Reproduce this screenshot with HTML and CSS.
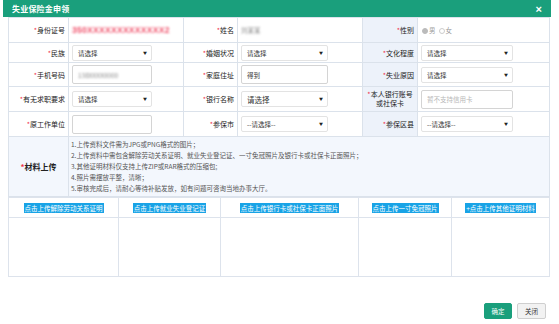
FILE: index.html
```html
<!DOCTYPE html>
<html lang="zh-CN">
<head>
    <meta charset="UTF-8">
    <title>失业保险金申领</title>
    <link rel="stylesheet" href="styles.css">
</head>
<body>

    <!-- 弹出层 -->
    <div class="dialog">
        <div class="dlg-head">
            <span class="dlg-title">失业保险金申领</span>
            <span class="dlg-close">×</span>
        </div>

        <div class="dlg-body">
            <!-- 基本信息 -->
            <table class="form">
                <colgroup>
                    <col style="width:60px"><col style="width:115px">
                    <col style="width:54px"><col style="width:125px">
                    <col style="width:55px"><col style="width:132px">
                </colgroup>
                <tr class="row-a">
                    <td class="lbl"><i>*</i>身份证号</td>
                    <td class="val"><span class="blur-red">350XXXXXXXXXXXXX2</span></td>
                    <td class="lbl"><i>*</i>姓名</td>
                    <td class="val"><span class="blur-gray">刘某某</span></td>
                    <td class="lbl lbl-hl"><i>*</i>性别</td>
                    <td class="val"><span class="radio on"></span><span class="gray">男</span><span class="radio"></span><span class="gray">女</span></td>
                </tr>
                <tr class="row-b">
                    <td class="lbl"><i>*</i>民族</td>
                    <td class="val"><div class="sel w1"><span>请选择</span><b>▼</b></div></td>
                    <td class="lbl"><i>*</i>婚姻状况</td>
                    <td class="val"><div class="sel w2"><span>请选择</span><b>▼</b></div></td>
                    <td class="lbl lbl-hl"><i>*</i>文化程度</td>
                    <td class="val"><div class="sel w3"><span>请选择</span><b>▼</b></div></td>
                </tr>
                <tr class="row-c">
                    <td class="lbl"><i>*</i>手机号码</td>
                    <td class="val"><div class="inp w1 tall"><span class="blur-gray">138XXXX0000</span></div></td>
                    <td class="lbl"><i>*</i>家庭住址</td>
                    <td class="val"><div class="inp w2 tall"><span>得到</span></div></td>
                    <td class="lbl lbl-hl"><i>*</i>失业原因</td>
                    <td class="val"><div class="sel w3"><span>请选择</span><b>▼</b></div></td>
                </tr>
                <tr class="row-d">
                    <td class="lbl"><i>*</i>有无求职要求</td>
                    <td class="val"><div class="sel w1"><span>请选择</span><b>▼</b></div></td>
                    <td class="lbl"><i>*</i>银行名称</td>
                    <td class="val"><div class="sel w2 big"><span>请选择</span><b>▼</b></div></td>
                    <td class="lbl lbl-hl two"><i>*</i>本人银行账号<br>或社保卡</td>
                    <td class="val"><div class="inp w3 tall"><span class="ph">暂不支持信用卡</span></div></td>
                </tr>
                <tr class="row-d">
                    <td class="lbl"><i>*</i>原工作单位</td>
                    <td class="val"><div class="inp w1 tall"></div></td>
                    <td class="lbl"><i>*</i>参保市</td>
                    <td class="val"><div class="sel w2"><span>--请选择--</span><b>▼</b></div></td>
                    <td class="lbl lbl-hl"><i>*</i>参保区县</td>
                    <td class="val"><div class="sel w3"><span>--请选择--</span><b>▼</b></div></td>
                </tr>
                <tr class="row-mat">
                    <td class="lbl lbl-big"><i>*</i>材料上传</td>
                    <td class="notes" colspan="5">
                        <p>1.上传资料文件需为JPG或PNG格式的图片；</p>
                        <p>2.上传资料中需包含解除劳动关系证明、就业失业登记证、一寸免冠照片及银行卡或社保卡正面照片；</p>
                        <p>3.其他证明材料仅支持上传ZIP或RAR格式的压缩包;</p>
                        <p>4.照片需摆放平整，清晰；</p>
                        <p>5.审核完成后，请耐心等待补贴发放，如有问题可咨询当地办事大厅。</p>
                    </td>
                </tr>
            </table>

            <!-- 上传区域 -->
            <table class="uploads">
                <colgroup>
                    <col style="width:110px"><col style="width:102px"><col style="width:138px">
                    <col style="width:93px"><col style="width:98px">
                </colgroup>
                <tr class="up-head">
                    <td><span class="up-btn">点击上传解除劳动关系证明</span></td>
                    <td><span class="up-btn">点击上传就业失业登记证</span></td>
                    <td><span class="up-btn">点击上传银行卡或社保卡正面照片</span></td>
                    <td><span class="up-btn">点击上传一寸免冠照片</span></td>
                    <td><span class="up-btn">+点击上传其他证明材料</span></td>
                </tr>
                <tr class="up-body">
                    <td></td><td></td><td></td><td></td><td></td>
                </tr>
            </table>
        </div>

        <div class="dlg-foot">
            <button class="btn btn-ok">确定</button>
            <button class="btn">关闭</button>
        </div>
        <div class="dlg-bar"></div>
    </div>

</body>
</html>
```

FILE: styles.css
```css
/* Estilos gerais */
body {
    margin: 0;
    padding: 0;
    background: #fff;
    font-family: "Noto Sans CJK SC", "Liberation Sans", sans-serif;
    color: #333;
}

.dialog {
    width: 548px;
    margin-left: 3px;
}

/* Cabeçalho */
.dlg-head {
    height: 17px;
    background-color: #1a9f7c;
    color: #fff;
    display: flex;
    align-items: center;
    justify-content: space-between;
    padding: 0 9px 0 9px;
}

.dlg-title {
    font-size: 8px;
    font-weight: bold;
    letter-spacing: 0.2px;
}

.dlg-close {
    font-family: "Liberation Sans", sans-serif;
    font-size: 11px;
    font-weight: bold;
}

.dlg-body {
    padding: 0 2px 0 5px;
}

/* Formulário */
table {
    border-collapse: collapse;
    table-layout: fixed;
    width: 541px;
}

td {
    border: 1px solid #dbe2eb;
    padding: 0;
    font-size: 7px;
    vertical-align: middle;
}

.row-a { height: 25px; }
.row-b { height: 20px; }
.row-c { height: 24px; }
.row-d { height: 25px; }
.row-mat { height: 60px; background-color: #f3f7fd; }

.lbl {
    text-align: right;
    padding-right: 3px;
    color: #222;
    white-space: nowrap;
}

.lbl i {
    font-style: normal;
    color: #f0304a;
}

.lbl-hl {
    background-color: #edf2fa;
}

.lbl.two {
    line-height: 9px;
    text-align: center;
    padding-right: 0;
}

.lbl-big {
    text-align: center;
    padding-right: 0;
    font-size: 8px;
    font-weight: bold;
}

.val {
    padding-left: 3px;
}

.sel, .inp {
    box-sizing: border-box;
    height: 16px;
    background: #fff;
    border: 1px solid #e3e3e3;
    border-radius: 2px;
    display: flex;
    align-items: center;
    justify-content: space-between;
    padding: 0 4px 0 5px;
    font-size: 6.5px;
    color: #333;
}

.sel b {
    font-size: 4px;
    font-weight: normal;
    color: #222;
}

.sel.big span {
    font-size: 7.5px;
}

.inp {
    border-color: #d4d4d4;
}

.inp.tall {
    height: 19px;
}

.w1 { width: 80px; }
.w2 { width: 87px; }
.w3 { width: 92px; }

.ph {
    color: #b8b8b8;
}

.blur-red {
    font-family: "Liberation Sans", sans-serif;
    font-size: 8.5px;
    font-weight: bold;
    color: #f0506a;
    filter: blur(0.9px);
    letter-spacing: 0.3px;
}

.blur-gray {
    font-size: 6.5px;
    color: #8a8a8a;
    filter: blur(0.8px);
}

.gray {
    color: #999;
    font-size: 6.5px;
    margin-right: 2px;
}

.radio {
    display: inline-block;
    width: 4px;
    height: 4px;
    border-radius: 50%;
    border: 1px solid #ccc;
    margin: 0 1px 0 1px;
    vertical-align: middle;
}

.radio.on {
    background-color: #bbb;
    border-color: #bbb;
}

/* Observações */
.notes {
    padding: 2px 0 0 2px;
    vertical-align: top;
}

.notes p {
    margin: 0;
    font-size: 6.5px;
    line-height: 11px;
    color: #555;
}

/* Área de upload */
.uploads td {
    border-color: #dde3ec;
}

.up-head {
    height: 20px;
}

.up-head td {
    text-align: center;
}

.up-body {
    height: 59px;
}

.up-btn {
    display: inline-block;
    background-color: #18a3e6;
    color: #fff;
    font-size: 6.5px;
    line-height: 10px;
    padding: 0 1px;
}

/* Rodapé */
.dlg-foot {
    display: flex;
    justify-content: flex-end;
    gap: 5px;
    padding: 26px 5px 0 0;
    height: 20px;
}

.btn {
    height: 16px;
    width: 29px;
    padding: 0;
    font-family: "Noto Sans CJK SC", sans-serif;
    font-size: 6.5px;
    border: 1px solid #cfcfcf;
    background-color: #f2f2f2;
    color: #333;
    border-radius: 2px;
}

.btn-ok {
    width: 28px;
    background-color: #1a9f7c;
    border-color: #1a9f7c;
    color: #fff;
}

.dlg-bar {
    height: 4px;
    margin-top: 3px;
    background-color: #1a9f7c;
}
```
